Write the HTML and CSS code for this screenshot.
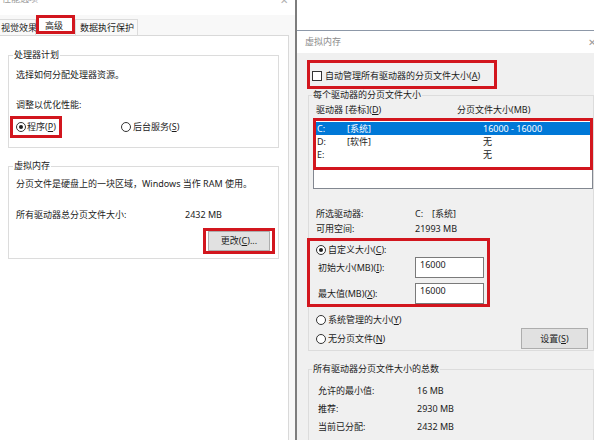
FILE: index.html
```html
<!DOCTYPE html>
<html lang="zh-CN">
<head>
<meta charset="utf-8">
<title>虚拟内存</title>
<link rel="stylesheet" href="styles.css">
</head>
<body>
<div class="screen">
  <div class="win-left">
    <div class="lt-title"><span class="lt-title-text">性能选项</span><span class="lt-close">✕</span></div>
    <div class="tabs">
      <div class="tab tab1">视觉效果</div>
      <div class="tab active">高级</div>
      <div class="tab tab3">数据执行保护</div>
    </div>
    <div class="panel">
      <div class="group g-cpu">
        <div class="legend">处理器计划</div>
        <div class="txt t1">选择如何分配处理器资源。</div>
        <div class="txt t2">调整以优化性能:</div>
        <div class="cpu-radios">
          <div class="opt mark-prog"><span class="radio on"></span><span>程序(<u>P</u>)</span></div>
          <div class="opt opt-bg"><span class="radio"></span><span>后台服务(<u>S</u>)</span></div>
        </div>
      </div>
      <div class="group g-vm">
        <div class="legend">虚拟内存</div>
        <div class="txt v1">分页文件是硬盘上的一块区域，Windows 当作 RAM 使用。</div>
        <div class="kv v2"><span class="k-left">所有驱动器总分页文件大小:</span><span>2432 MB</span></div>
        <div class="btn-row"><div class="mark-btn"><div class="btn btn-change">更改(<u>C</u>)...</div></div></div>
      </div>
    </div>
  </div>
  <div class="divider"></div>
  <div class="win-right">
    <div class="rt-top"></div>
    <div class="rt-title"><span>虚拟内存</span><span class="rt-close">✕</span></div>
    <div class="rt-body">
      <div class="checkrow"><span class="checkbox"></span><span>自动管理所有驱动器的分页文件大小(<u>A</u>)</span></div>
      <div class="group rg1">
        <div class="legend">每个驱动器的分页文件大小</div>
        <div class="list-head"><span class="lh1">驱动器 [卷标](<u>D</u>)</span><span>分页文件大小(MB)</span></div>
        <div class="listbox">
          <div class="rows">
            <div class="row sel"><span class="c1">C:</span><span class="c2">[系统]</span><span>16000&nbsp;-&nbsp;16000</span></div>
            <div class="row"><span class="c1">D:</span><span class="c2">[软件]</span><span>无</span></div>
            <div class="row"><span class="c1">E:</span><span class="c2"></span><span>无</span></div>
          </div>
        </div>
        <div class="info">
          <div class="kv"><span class="k">所选驱动器:</span><span class="drv">C:</span><span>[系统]</span></div>
          <div class="kv"><span class="k">可用空间:</span><span>21993 MB</span></div>
        </div>
        <div class="custom">
          <div class="opt"><span class="radio on"></span><span>自定义大小(<u>C</u>):</span></div>
          <div class="field f1"><span class="flabel">初始大小(MB)(<u>I</u>):</span><div class="input">16000</div></div>
          <div class="field f2"><span class="flabel">最大值(MB)(<u>X</u>):</span><div class="input">16000</div></div>
        </div>
        <div class="opt sys"><span class="radio"></span><span>系统管理的大小(<u>Y</u>)</span></div>
        <div class="none-row">
          <div class="opt"><span class="radio"></span><span>无分页文件(<u>N</u>)</span></div>
          <div class="btn btn-set">设置(<u>S</u>)</div>
        </div>
      </div>
      <div class="group rg2">
        <div class="legend">所有驱动器分页文件大小的总数</div>
        <div class="tot t-first"><span class="k">允许的最小值:</span><span>16 MB</span></div>
        <div class="tot"><span class="k">推荐:</span><span>2930 MB</span></div>
        <div class="tot"><span class="k">当前已分配:</span><span>2432 MB</span></div>
      </div>
    </div>
  </div>
</div>
</body>
</html>
```

FILE: styles.css
```css
* { box-sizing: border-box; margin: 0; padding: 0; }
html, body { width: 594px; height: 440px; overflow: hidden; }
body {
  font-family: "Noto Sans", "Noto Sans CJK SC", sans-serif;
  font-size: 9px;
  line-height: 12px;
  color: #1c1c1c;
  background: #fff;
}
u { text-decoration: underline; text-underline-offset: 1px; }

.screen { display: flex; width: 594px; height: 440px; }

/* ---------- left window ---------- */
.win-left {
  width: 295px; flex: none;
  background: #f8f8f8;
  display: flex; flex-direction: column;
}
.lt-title {
  height: 15px; flex: none; background: #fff;
  display: flex; justify-content: space-between; overflow: hidden;
}
.lt-title-text { color: #9a9a9a; margin-top: -7px; margin-left: 2px; }
.lt-close { color: #b0b0b0; margin-top: -6px; margin-right: 7px; font-size: 10px; }

.tabs { display: flex; align-items: flex-start; height: 20px; flex: none; margin-left: -5px; }
.tab {
  margin-top: 4px; height: 16px; line-height: 15px;
  border: 1px solid #dcdcdc; border-bottom: none;
  background: #f9f9f9; white-space: nowrap;
}
.tab1 { width: 41px; padding-left: 5px; }
.tab3 { width: 63px; padding-left: 4px; }
.tab.active {
  margin-top: 0; width: 39px; height: 19px;
  border: 3px solid #d2161e;
  padding: 2px 0 0 6px; line-height: 11px;
  background: #fff;
}

.panel {
  flex: 1; background: #fff;
  border-top: 1px solid #d9d9d9; border-right: 1px solid #d9d9d9;
  margin-right: 6px;
  display: flex; flex-direction: column; align-items: flex-start;
}

.group { border: 1px solid #dcdcdc; display: flex; flex-direction: column; align-items: flex-start; }
.legend { height: 12px; margin-top: -7px; padding: 0 1px; background: #fff; white-space: nowrap; }

.g-cpu { margin: 19px 0 0 8px; width: 271px; padding: 0 0 9px 7px; }
.g-cpu .legend { margin-left: -3px; }
.t1 { margin-top: 8px; }
.t2 { margin-top: 18px; }
.cpu-radios { margin: 5px 0 0 -6px; display: flex; align-items: center; }
.opt { display: flex; align-items: center; gap: 2px; white-space: nowrap; }
.mark-prog { width: 52px; height: 22px; border: 3px solid #d2161e; padding-left: 3px; gap: 1px; }
.opt-bg { margin-left: 59px; }

.radio {
  width: 10px; height: 10px; flex: none;
  border: 1px solid #333; border-radius: 50%; background: #fff;
  display: inline-flex; align-items: center; justify-content: center;
}
.radio.on::after { content: ""; width: 4px; height: 4px; border-radius: 50%; background: #1f1f1f; }

.g-vm { margin: 18px 0 0 8px; width: 271px; padding: 0 0 4px 7px; }
.g-vm .legend { margin-left: -3px; }
.v1 { margin-top: 6px; white-space: nowrap; }
.v2 { margin-top: 19px; display: flex; }
.k-left { width: 169px; }
.btn-row { margin-top: 7px; align-self: stretch; display: flex; justify-content: flex-end; padding-right: 3px; }
.mark-btn { border: 3px solid #d2161e; padding: 0 2px; height: 26px; }

.btn {
  background: #e1e1e1; border: 1px solid #adadad;
  display: flex; align-items: center; justify-content: center; white-space: nowrap;
}
.btn-change { width: 62px; height: 20px; }

.divider { width: 2px; flex: none; background: #7d7d7d; }

/* ---------- right window ---------- */
.win-right { flex: 1; display: flex; flex-direction: column; min-width: 0; }
.rt-top { height: 31px; flex: none; background: #fff; border-bottom: 1px solid #8d98a8; }
.rt-title {
  height: 22px; flex: none; background: #fff;
  display: flex; justify-content: space-between; align-items: center;
  padding-left: 8px; color: #8c8c8c; overflow: hidden;
}
.rt-close { font-size: 10px; color: #9a9a9a; margin-right: -2px; }
.rt-body {
  flex: 1; background: #f0f0f0; padding-top: 7px; overflow: hidden;
  display: flex; flex-direction: column; align-items: flex-start;
}
.rt-body .legend { background: #f0f0f0; margin-left: 3px; }

.checkrow {
  margin-left: 10px; width: 190px; height: 29px;
  border: 3px solid #d2161e;
  display: flex; align-items: center; gap: 3px;
  padding: 2px 0 0 2px; white-space: nowrap;
}
.checkbox { width: 10px; height: 10px; flex: none; border: 1px solid #333; background: #fff; }

.rg1 { margin: 6px 0 0 11px; width: 286px; padding-bottom: 1px; }
.list-head { margin-top: 3px; padding-left: 7px; display: flex; white-space: nowrap; }
.lh1 { width: 141px; }

.listbox {
  margin: 2px 0 0 4px; width: 280px; height: 71px;
  border: 1px solid #828790; background: #fff;
}
.rows { margin: -1px -1px 0 -1px; height: 52px; border: 3px solid #d2161e; padding-top: 1px; }
.row { height: 13px; line-height: 13px; display: flex; padding-left: 1px; white-space: nowrap; }
.row.sel { background: #0078d7; color: #fff; }
.c1 { width: 30px; }
.c2 { width: 136px; }

.info { margin-top: 17px; padding-left: 7px; }
.info .kv { height: 15px; line-height: 15px; display: flex; white-space: nowrap; }
.k { width: 99px; flex: none; }
.drv { width: 17px; }

.custom {
  margin: 2px 0 0 -2px; width: 183px;
  border: 3px solid #d2161e; padding: 2px 0 0 6px;
  display: flex; flex-direction: column;
}
.custom .opt { height: 13px; }
.field { display: flex; align-items: center; height: 21px; padding-left: 2px; }
.f1 { margin-top: 1px; }
.f2 { margin-top: 5px; }
.flabel { width: 97px; flex: none; white-space: nowrap; }
.input {
  width: 69px; height: 21px; background: #fff; border: 1px solid #7a7a7a;
  padding: 1px 0 0 4px; line-height: 12px;
}

.sys { margin-top: 6px; padding-left: 7px; height: 13px; }
.none-row {
  margin-top: 2px; height: 21px; align-self: stretch;
  display: flex; align-items: center; justify-content: space-between;
  padding: 0 5px 0 7px;
}
.btn-set { width: 67px; height: 21px; }

.rg2 { margin: 18px 0 0 11px; width: 286px; flex: 1; border-bottom: none; }
.rg2 .legend { margin-left: 3px; }
.tot { height: 18px; line-height: 18px; display: flex; padding-left: 9px; white-space: nowrap; }
.t-first { margin-top: 7px; }
```
